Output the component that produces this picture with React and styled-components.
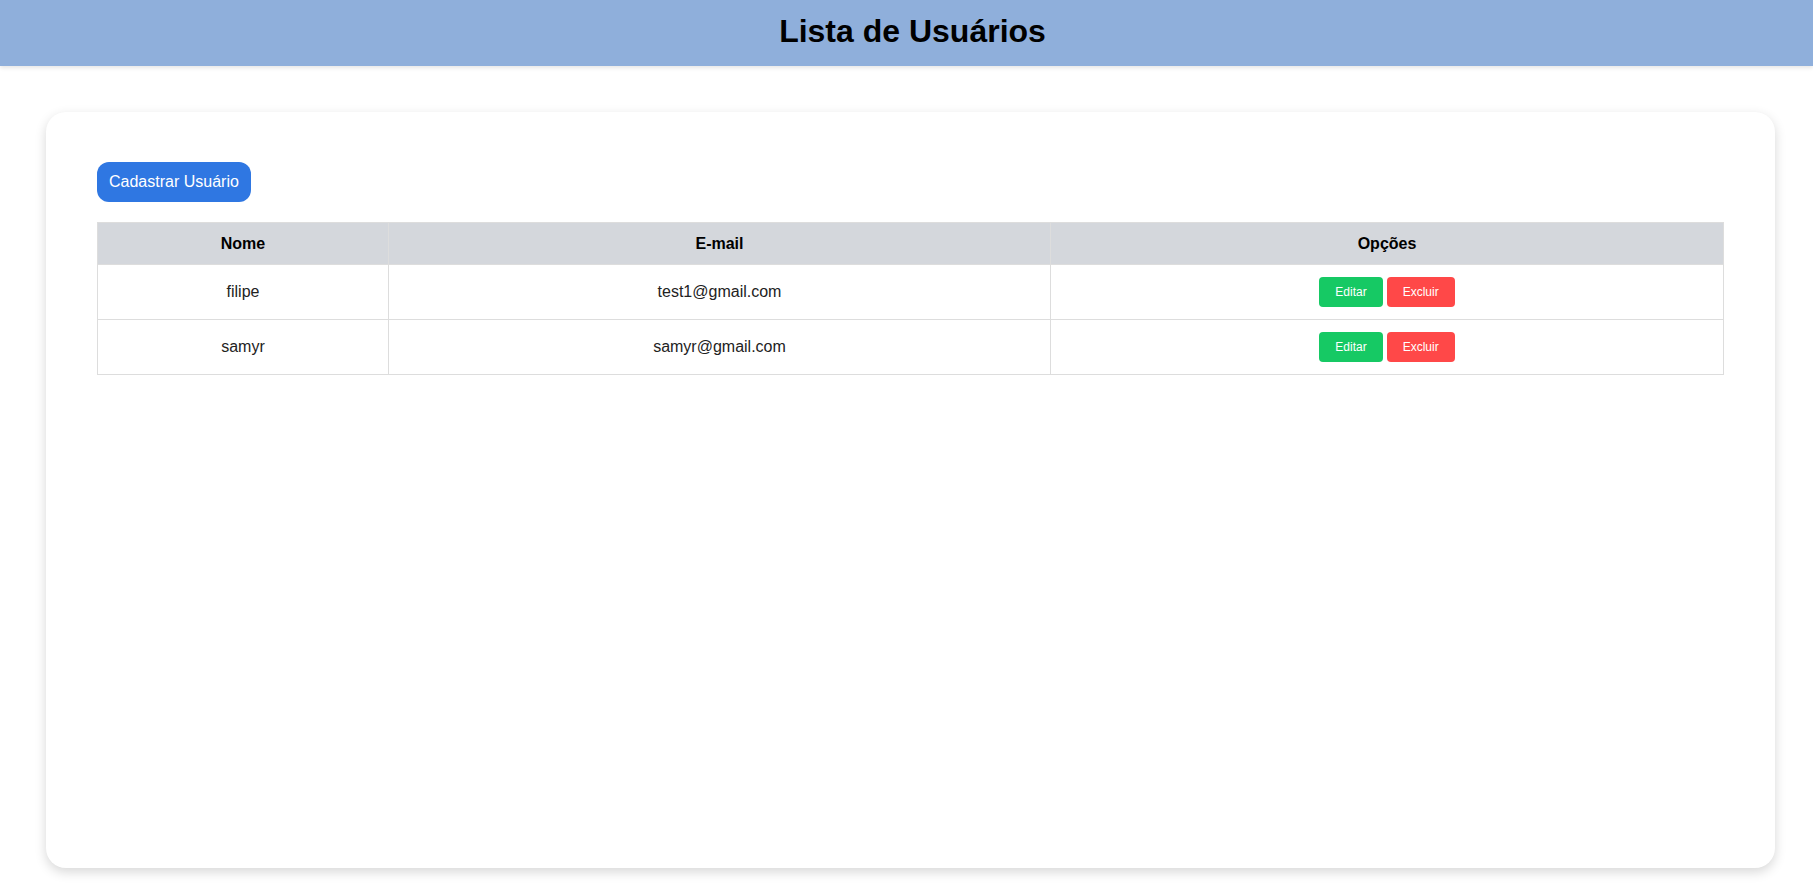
import React from "react";
import styled, { createGlobalStyle } from "styled-components";

const GlobalStyle = createGlobalStyle`
  * { box-sizing: border-box; }
  html, body { margin: 0; padding: 0; background: #ffffff; }
  body { font-family: "Liberation Sans", Arial, sans-serif; color: #222; }
`;

const Page = styled.div`
  min-height: 886px;
  display: flex;
  flex-direction: column;
`;

const Header = styled.header`
  height: 66px;
  background: #8fafdb;
  display: flex;
  align-items: center;
  justify-content: center;
  padding: 0 0 3px 12px;
  box-shadow: 0 2px 4px rgba(0, 0, 0, 0.1);
  position: relative;
  z-index: 1;
`;

const Title = styled.h1`
  margin: 0;
  font-size: 32px;
  font-weight: 700;
  color: #000;
`;

const Main = styled.main`
  padding: 46px 38px 18px 46px;
`;

const Card = styled.section`
  height: 756px;
  background: #fff;
  border-radius: 20px;
  box-shadow: 0 4px 12px rgba(0, 0, 0, 0.16);
  padding: 50px 51px;
`;

const PrimaryButton = styled.button`
  display: inline-block;
  border: none;
  background: #2f77e2;
  color: #fff;
  font-family: "Liberation Sans", Arial, sans-serif;
  font-size: 16px;
  line-height: 20px;
  padding: 10px 12px;
  border-radius: 12px;
  cursor: pointer;
  margin-bottom: 20px;
`;

const Table = styled.table`
  width: 100%;
  border-collapse: collapse;
  table-layout: fixed;
  border: 1px solid #ddd;
`;

const Th = styled.th`
  background: #d4d7dc;
  color: #000;
  font-weight: 700;
  font-size: 16px;
  line-height: 17px;
  padding: 12px;
  border: 1px solid #ddd;
  text-align: center;
`;

const Td = styled.td`
  font-size: 16px;
  line-height: 18px;
  color: #222;
  padding: 12px;
  border: 1px solid #ddd;
  text-align: center;
  height: 54px;
`;

const ActionButton = styled.button`
  border: none;
  color: #fff;
  font-family: "Liberation Sans", Arial, sans-serif;
  font-size: 12px;
  line-height: 14px;
  padding: 8px 16px;
  border-radius: 4px;
  cursor: pointer;
  background: ${(p) => (p.$variant === "danger" ? "#ff4848" : "#16c964")};
  & + & { margin-left: 4px; }
`;

const users = [
  { name: "filipe", email: "test1@gmail.com" },
  { name: "samyr", email: "samyr@gmail.com" },
];

export default function App() {
  return (
    <Page>
      <GlobalStyle />
      <Header>
        <Title>Lista de Usuários</Title>
      </Header>
      <Main>
        <Card>
          <PrimaryButton>Cadastrar Usuário</PrimaryButton>
          <Table>
            <colgroup>
              <col style={{ width: "291px" }} />
              <col style={{ width: "662px" }} />
              <col />
            </colgroup>
            <thead>
              <tr>
                <Th>Nome</Th>
                <Th>E-mail</Th>
                <Th>Opções</Th>
              </tr>
            </thead>
            <tbody>
              {users.map((u) => (
                <tr key={u.email}>
                  <Td>{u.name}</Td>
                  <Td>{u.email}</Td>
                  <Td>
                    <ActionButton>Editar</ActionButton>
                    <ActionButton $variant="danger">Excluir</ActionButton>
                  </Td>
                </tr>
              ))}
            </tbody>
          </Table>
        </Card>
      </Main>
    </Page>
  );
}
